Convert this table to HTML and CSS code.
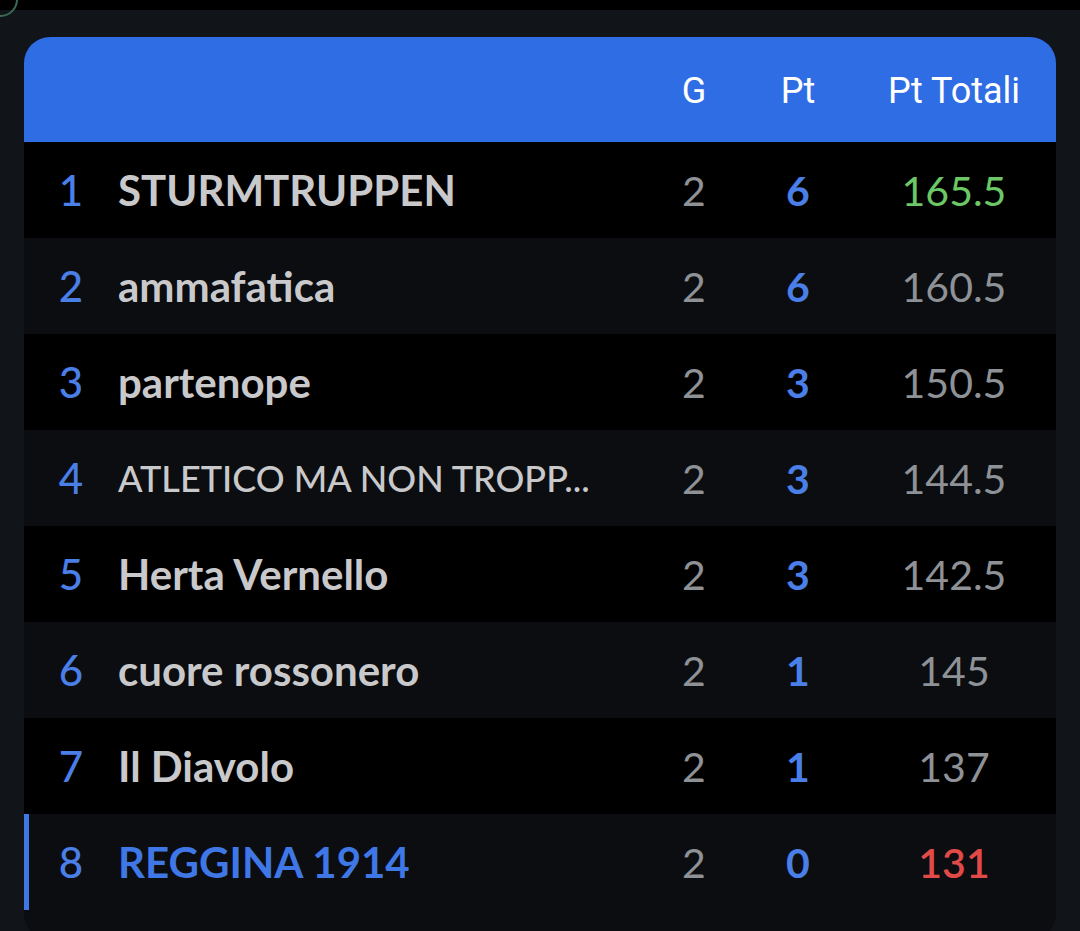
FILE: index.html
```html
<!DOCTYPE html>
<html lang="it">
<head>
<meta charset="utf-8">
<title>Classifica</title>
<link rel="stylesheet" href="styles.css">
</head>
<body>
<div class="topbar"><span class="ring"></span></div>
<main class="page">
  <section class="card">
    <div class="row head">
      <span class="rank"></span>
      <span class="name"></span>
      <span class="num">G</span>
      <span class="num">Pt</span>
      <span class="num">Pt Totali</span>
    </div>
    <div class="row odd">
      <span class="rank">1</span>
      <span class="name">STURMTRUPPEN</span>
      <span class="num g">2</span>
      <span class="num pt">6</span>
      <span class="num tot best">165.5</span>
    </div>
    <div class="row even">
      <span class="rank">2</span>
      <span class="name">ammafatica</span>
      <span class="num g">2</span>
      <span class="num pt">6</span>
      <span class="num tot">160.5</span>
    </div>
    <div class="row odd">
      <span class="rank">3</span>
      <span class="name">partenope</span>
      <span class="num g">2</span>
      <span class="num pt">3</span>
      <span class="num tot">150.5</span>
    </div>
    <div class="row even">
      <span class="rank">4</span>
      <span class="name small">ATLETICO MA NON TROPP...</span>
      <span class="num g">2</span>
      <span class="num pt">3</span>
      <span class="num tot">144.5</span>
    </div>
    <div class="row odd">
      <span class="rank">5</span>
      <span class="name">Herta Vernello</span>
      <span class="num g">2</span>
      <span class="num pt">3</span>
      <span class="num tot">142.5</span>
    </div>
    <div class="row even">
      <span class="rank">6</span>
      <span class="name">cuore rossonero</span>
      <span class="num g">2</span>
      <span class="num pt">1</span>
      <span class="num tot">145</span>
    </div>
    <div class="row odd">
      <span class="rank">7</span>
      <span class="name">Il Diavolo</span>
      <span class="num g">2</span>
      <span class="num pt">1</span>
      <span class="num tot">137</span>
    </div>
    <div class="row even mine">
      <span class="rank">8</span>
      <span class="name">REGGINA 1914</span>
      <span class="num g">2</span>
      <span class="num pt">0</span>
      <span class="num tot worst">131</span>
    </div>
  </section>
</main>
</body>
</html>
```

FILE: styles.css
```css
html, body {
  margin: 0;
  padding: 0;
  background: #111418;
  height: 931px;
  overflow: hidden;
}

.topbar {
  height: 10px;
  background: #000;
  position: relative;
}

.ring {
  position: absolute;
  left: -17px;
  top: -18px;
  width: 31px;
  height: 31px;
  border: 2px solid #3a6b56;
  border-radius: 50%;
  z-index: 2;
}

.page {
  padding: 27px 24px 0 24px;
}

.card {
  background: #0b0d10;
  border-radius: 26px;
  overflow: hidden;
  padding-bottom: 30px;
}

.row {
  display: grid;
  grid-template-columns: 94px 1fr 100px 108px 204px;
  align-items: center;
  height: 96px;
  font-family: Lato, "Noto Sans", sans-serif;
  font-size: 41px;
  position: relative;
}

.row.head {
  height: 105px;
  background: #2f6de5;
  font-family: Roboto, "Noto Sans", sans-serif;
  font-size: 36px;
  color: #ffffff;
}

.row.head .num {
  padding-top: 2px;
}

.row.odd { background: #000000; }
.row.even { background: #0b0d10; }

.rank {
  text-align: center;
  color: #4a7fe8;
  font-size: 42px;
  font-weight: 500;
}

.name {
  color: #c9c9cb;
  font-size: 42px;
  font-weight: 700;
  white-space: nowrap;
  padding-right: 20px;
}

.name.small {
  font-size: 36px;
  font-weight: 500;
}

.num {
  text-align: center;
}

.g { color: #8e9297; }
.pt { color: #4a7fe8; font-weight: 700; }
.tot { color: #8e9297; }
.tot.best { color: #6cc766; }
.tot.worst { color: #e24a48; font-weight: 600; }

.mine .name { color: #3f78e6; }

.mine::before {
  content: "";
  position: absolute;
  left: 0;
  top: 0;
  bottom: 0;
  width: 5px;
  background: #3f78e6;
}
```
